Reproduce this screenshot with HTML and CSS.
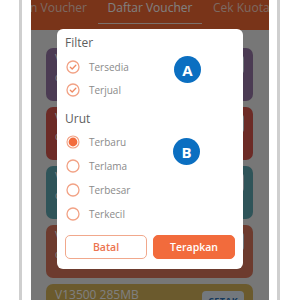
FILE: index.html
```html
<!DOCTYPE html>
<html>
<head>
<meta charset="utf-8">
<link rel="stylesheet" href="styles.css">
</head>
<body>
<div class="device">
  <div class="screen">
    <div class="header">
      <div class="tabs">
        <div class="tab left">Pesan Voucher</div>
        <div class="tab active">Daftar Voucher</div>
        <div class="tab right">Cek Kuota</div>
      </div>
    </div>
    <div class="cards">
      <div class="card c1"><div class="info"><div class="name">V10000 1GB</div><div class="sub">cetak: 12</div></div><div class="cetak">CETAK</div></div>
      <div class="card c2"><div class="info"><div class="name">V20000 2GB</div><div class="sub">cetak: 8</div></div><div class="cetak">CETAK</div></div>
      <div class="card c3"><div class="info"><div class="name">V25000 3GB</div><div class="sub">cetak: 5</div></div><div class="cetak">CETAK</div></div>
      <div class="card c4"><div class="info"><div class="name">V50000 8GB</div><div class="sub">cetak: 3</div></div><div class="cetak">CETAK</div></div>
      <div class="card c5"><div class="info"><div class="name">V13500 285MB</div><div class="sub">cetak: 2</div></div><div class="cetak">CETAK</div></div>
    </div>
    <div class="overlay"></div>
    <div class="modal">
      <div class="section-title">Filter</div>
      <div class="list first">
        <div class="row"><svg class="ico" viewBox="0 0 14 14"><circle cx="7" cy="7" r="6" fill="none" stroke="#f2a285" stroke-width="1.3"/><path d="M4.3 7.2 L6.2 9 L9.8 5.2" fill="none" stroke="#ef8a63" stroke-width="1.3" stroke-linecap="round" stroke-linejoin="round"/></svg><span>Tersedia</span></div>
        <div class="row"><svg class="ico" viewBox="0 0 14 14"><circle cx="7" cy="7" r="6" fill="none" stroke="#f2a285" stroke-width="1.3"/><path d="M4.3 7.2 L6.2 9 L9.8 5.2" fill="none" stroke="#ef8a63" stroke-width="1.3" stroke-linecap="round" stroke-linejoin="round"/></svg><span>Terjual</span></div>
      </div>
      <div class="section-title urut">Urut</div>
      <div class="list radios">
        <div class="row"><svg class="ico" viewBox="0 0 14 14"><circle cx="7" cy="7" r="6" fill="none" stroke="#f2a285" stroke-width="1.1"/><circle cx="7" cy="7" r="4.4" fill="#f26b3c"/></svg><span>Terbaru</span></div>
        <div class="row"><svg class="ico" viewBox="0 0 14 14"><circle cx="7" cy="7" r="6" fill="none" stroke="#f2a285" stroke-width="1.3"/></svg><span>Terlama</span></div>
        <div class="row"><svg class="ico" viewBox="0 0 14 14"><circle cx="7" cy="7" r="6" fill="none" stroke="#f2a285" stroke-width="1.3"/></svg><span>Terbesar</span></div>
        <div class="row"><svg class="ico" viewBox="0 0 14 14"><circle cx="7" cy="7" r="6" fill="none" stroke="#f2a285" stroke-width="1.3"/></svg><span>Terkecil</span></div>
      </div>
      <div class="actions">
        <button class="btn outline">Batal</button>
        <button class="btn solid">Terapkan</button>
      </div>
    </div>
    <div class="badge badge-a">A</div>
    <div class="badge badge-b">B</div>
  </div>
</div>
</body>
</html>
```
FILE: styles.css
```css
* { box-sizing: border-box; }
html, body { margin: 0; padding: 0; background: #fff; }
body { font-family: "Open Sans", "Liberation Sans", sans-serif; overflow: hidden; height: 300px; }

.device {
  width: 261px;
  height: 300px;
  margin-left: 19px;
  border-left: 3px solid #cfcfcf;
  border-right: 3px solid #cfcfcf;
  padding: 0 8px 0 9px;
}
.screen {
  position: relative;
  width: 238px;
  height: 300px;
  overflow: hidden;
  background: #eeeeee;
}
.header {
  height: 30px;
  background: #f36833;
  overflow: hidden;
}
.tabs {
  display: flex;
  white-space: nowrap;
  margin-left: -37px;
  width: 312px;
}
.tab {
  flex: none;
  width: 104px;
  height: 24px;
  line-height: 15px;
  font-size: 12px;
  color: #f8d2c2;
  text-align: center;
  border-bottom: 1.5px solid transparent;
  overflow: visible;
}
.tab.left { display: flex; justify-content: flex-end; padding-right: 11px; }
.tab.right { text-align: left; padding-left: 11px; }
.tab.active { color: #ffffff; border-bottom-color: #fbe0d4; }

.cards {
  display: flex;
  flex-direction: column;
  gap: 6px;
  padding: 18px 16px 0 15px;
}
.card {
  height: 53px;
  border-radius: 7px;
  display: flex;
  justify-content: space-between;
  align-items: flex-start;
  padding: 3px 9px 0 9px;
  color: #fff;
}
.c1 { background: #9676a6; }
.c2 { background: #d8564c; }
.c3 { background: #5ea8b2; }
.c4 { background: #da765c; }
.c5 { background: #d6b45a; }
.info .name { font-size: 12px; line-height: 15px; }
.info .sub { font-size: 10px; line-height: 22px; }
.cetak {
  margin-top: 4px;
  background: #e6f1fb;
  color: #2a72b8;
  font-size: 9px;
  font-weight: 700;
  padding: 3px 6px;
  border-radius: 4px;
  letter-spacing: 0.3px;
}

.overlay {
  position: absolute;
  inset: 0;
  background: rgba(0, 0, 0, 0.5);
}
.modal {
  position: absolute;
  left: 26px;
  top: 29px;
  width: 186px;
  height: 240px;
  background: #fff;
  border-radius: 6px;
  padding: 7px 8px 9px 8px;
}
.section-title {
  font-size: 12px;
  line-height: 14px;
  color: #5e5e5e;
}
.section-title.urut { margin-top: 11px; }
.list.first { margin-top: 5px; }
.list.radios { margin-top: 4px; }
.row {
  display: flex;
  align-items: center;
  gap: 9px;
  height: 23px;
  padding-left: 1px;
}
.radios .row { height: 24px; }
.ico { width: 14px; height: 14px; flex: none; }
.row span { font-size: 10px; color: #8a8a8a; }

.actions {
  display: flex;
  gap: 6px;
  margin-top: 9px;
}
.btn {
  flex: 1;
  height: 24px;
  border-radius: 5px;
  font-family: "Open Sans", "Liberation Sans", sans-serif;
  font-size: 10.5px;
  font-weight: 600;
  cursor: pointer;
}
.btn.outline { background: #fff; border: 1px solid #f1a88c; color: #ec7450; }
.btn.solid { background: #f26b3c; border: 1px solid #f26b3c; color: #fff; }

.badge {
  position: absolute;
  width: 27px;
  height: 27px;
  border-radius: 50%;
  background: #0b6fc1;
  color: #fff;
  font-family: "Open Sans", "Liberation Sans", sans-serif;
  font-weight: 700;
  font-size: 15px;
  display: flex;
  align-items: center;
  justify-content: center;
}
.badge-a { left: 143px; top: 56px; }
.badge-b { left: 142px; top: 138px; }
```
